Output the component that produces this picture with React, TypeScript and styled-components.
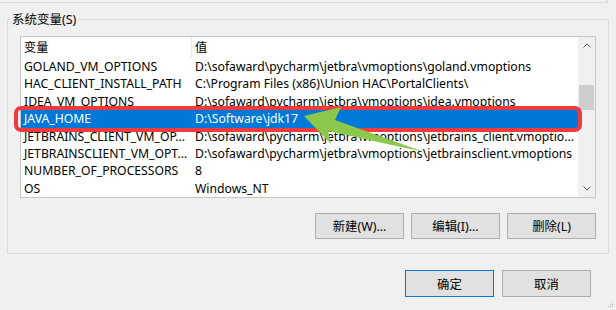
import React from 'react'
import styled, { createGlobalStyle } from 'styled-components'

const GlobalStyle = createGlobalStyle`
  html, body {
    margin: 0;
    padding: 0;
    background: #f0f0f0;
  }
`;

const FONT = `'Noto Sans', 'Noto Sans CJK SC', sans-serif`;

const Window = styled.div`
  position: relative;
  width: 616px;
  height: 310px;
  overflow: hidden;
  background: #f0f0f0;
  font-family: ${FONT};
  font-size: 12.2px;
  color: #000;
`;

const PrevGroupEdge = styled.div`
  height: 2px;
  margin-right: 8px;
  border-bottom: 1px solid #dcdcdc;
  border-right: 1px solid #dcdcdc;
`;

const GroupBox = styled.div`
  margin: 16px 7px 0;
  border: 1px solid #dcdcdc;
  padding: 0 12px 14px;
`;

const Legend = styled.div`
  width: fit-content;
  height: 18px;
  line-height: 18px;
  margin: -9px 0 0 -10px;
  padding: 0 2px;
  background: #f0f0f0;
  font-size: 12.5px;
`;

const ListBox = styled.div`
  margin-top: 7px;
  height: 160px;
  border: 1px solid #c6c6c6;
  background: #fff;
  display: flex;
`;

const Rows = styled.div`
  flex: 1;
  min-width: 0;
  overflow: hidden;
`;

const Row = styled.div<{ $header?: boolean; $selected?: boolean }>`
  display: grid;
  grid-template-columns: 171px 1fr;
  height: ${p => (p.$header ? '21px' : '17.4px')};
  line-height: ${p => (p.$header ? '21px' : '17.4px')};
  background: ${p => (p.$selected ? '#0078d7' : 'transparent')};
  color: ${p => (p.$selected ? '#fff' : '#000')};
`;

const Cell = styled.div<{ $divider?: boolean }>`
  padding-left: 3px;
  white-space: nowrap;
  overflow: hidden;
  border-right: ${p => (p.$divider ? '1px solid #e5e5e5' : 'none')};
`;

const ScrollBar = styled.div`
  width: 17px;
  background: #f0f0f0;
  display: flex;
  flex-direction: column;
`;

const ScrollArrow = styled.div`
  height: 17px;
  display: flex;
  align-items: center;
  justify-content: center;
`;

const Thumb = styled.div`
  margin: 31px 1px 0;
  height: 25px;
  background: #cdcdcd;
`;

const Spacer = styled.div`
  flex: 1;
`;

const ButtonRow = styled.div<{ $gap: number }>`
  display: flex;
  justify-content: flex-end;
  gap: ${p => p.$gap}px;
`;

const GroupButtons = styled(ButtonRow)`
  margin-top: 15px;
`;

const DialogButtons = styled(ButtonRow)`
  margin-top: 16px;
  padding-right: 25px;
`;

const Button = styled.button<{ $default?: boolean; $tall?: boolean }>`
  box-sizing: border-box;
  width: 89px;
  height: ${p => (p.$tall ? '27px' : '26px')};
  padding: 0;
  background: #e1e1e1;
  border: 1px solid ${p => (p.$default ? '#0078d7' : '#adadad')};
  font-family: ${FONT};
  font-size: 12.4px;
  color: #000;
`;

const RedMark = styled.div`
  position: absolute;
  left: 14px;
  top: 106px;
  width: 560px;
  height: 18px;
  border: 4px solid #f03b3d;
  border-radius: 7px;
`;

const Overlay = styled.svg`
  position: absolute;
  left: 0;
  top: 0;
  pointer-events: none;
`;

const Grip = styled.svg`
  position: absolute;
  right: 2px;
  bottom: 2px;
`;

const rows = [
  ['GOLAND_VM_OPTIONS', 'D:\\sofaward\\pycharm\\jetbra\\vmoptions\\goland.vmoptions'],
  ['HAC_CLIENT_INSTALL_PATH', 'C:\\Program Files (x86)\\Union HAC\\PortalClients\\'],
  ['IDEA_VM_OPTIONS', 'D:\\sofaward\\pycharm\\jetbra\\vmoptions\\idea.vmoptions'],
  ['JAVA_HOME', 'D:\\Software\\jdk17'],
  ['JETBRAINS_CLIENT_VM_OP...', 'D:\\sofaward\\pycharm\\jetbra\\vmoptions\\jetbrains_client.vmoptio...'],
  ['JETBRAINSCLIENT_VM_OPT...', 'D:\\sofaward\\pycharm\\jetbra\\vmoptions\\jetbrainsclient.vmoptions'],
  ['NUMBER_OF_PROCESSORS', '8'],
  ['OS', 'Windows_NT'],
];

const Chevron = ({ up }: { up?: boolean }) => (
  <svg width="8" height="5" viewBox="0 0 8 5">
    <path
      d={up ? 'M0.5 4.5 L4 1 L7.5 4.5' : 'M0.5 0.5 L4 4 L7.5 0.5'}
      fill="none"
      stroke="#606060"
      strokeWidth="1"
    />
  </svg>
);

export default function App() {
  return (
    <Window>
      <GlobalStyle />
      <PrevGroupEdge />
      <GroupBox>
        <Legend>系统变量(S)</Legend>
        <ListBox>
          <Rows>
            <Row $header>
              <Cell $divider>变量</Cell>
              <Cell>值</Cell>
            </Row>
            {rows.map(([name, value]) => (
              <Row key={name} $selected={name === 'JAVA_HOME'}>
                <Cell>{name}</Cell>
                <Cell>{value}</Cell>
              </Row>
            ))}
          </Rows>
          <ScrollBar>
            <ScrollArrow><Chevron up /></ScrollArrow>
            <Thumb />
            <Spacer />
            <ScrollArrow><Chevron /></ScrollArrow>
          </ScrollBar>
        </ListBox>
        <GroupButtons $gap={7}>
          <Button>新建(W)...</Button>
          <Button>编辑(I)...</Button>
          <Button>删除(L)</Button>
        </GroupButtons>
      </GroupBox>
      <DialogButtons $gap={8}>
        <Button $tall $default>确定</Button>
        <Button $tall>取消</Button>
      </DialogButtons>

      <RedMark />
      <Overlay width="616" height="310" viewBox="0 0 616 310">
        <polygon
          points="304,116 341,107 335,120 424,152 328,131 331,144"
          fill="#8cc84b"
        />
      </Overlay>
      <Grip width="6" height="6" viewBox="0 0 6 6">
        <rect x="4" y="0" width="1" height="1" fill="#b0b0b0" />
        <rect x="2" y="2" width="1" height="1" fill="#b0b0b0" />
        <rect x="4" y="2" width="1" height="1" fill="#b0b0b0" />
        <rect x="0" y="4" width="1" height="1" fill="#b0b0b0" />
        <rect x="2" y="4" width="1" height="1" fill="#b0b0b0" />
        <rect x="4" y="4" width="1" height="1" fill="#b0b0b0" />
      </Grip>
    </Window>
  )
}
